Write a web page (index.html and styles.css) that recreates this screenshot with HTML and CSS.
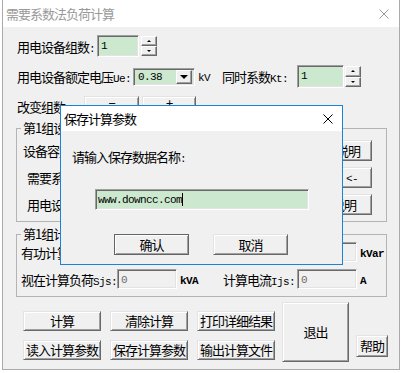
FILE: index.html
```html
<!DOCTYPE html>
<html lang="zh-CN">

<head>
    <meta charset="UTF-8">
    <meta name="viewport" content="width=device-width, initial-scale=1.0">
    <title>需要系数法负荷计算</title>
    <link rel="stylesheet" href="styles.css">
</head>

<body>

    <div class="win">
        <div class="title-bar">
            <span class="title inactive">需要系数法负荷计算</span>
            <svg class="close" width="10" height="10" viewBox="0 0 10 10">
                <path d="M0.5 0.5L9.5 9.5M9.5 0.5L0.5 9.5" stroke="#999" stroke-width="1" />
            </svg>
        </div>

        <div class="client">
            <div class="row row1">
                <label class="lbl w-count">用电设备组数<span class="m">:</span></label>
                <div class="edit count"><span class="m">1</span></div>
                <div class="spin">
                    <button class="spin-up"></button>
                    <button class="spin-down"></button>
                </div>
            </div>

            <div class="row row2">
                <label class="lbl w-ue">用电设备额定电压<span class="m">Ue:</span></label>
                <div class="combo">
                    <span class="m">0.38</span>
                    <span class="drop"></span>
                </div>
                <span class="unit-kv m">kV</span>
                <label class="lbl w-kt">同时系数<span class="m">Kt:</span></label>
                <div class="edit kt"><span class="m">1</span></div>
                <div class="spin tall">
                    <button class="spin-up"></button>
                    <button class="spin-down"></button>
                </div>
            </div>

            <div class="row row3">
                <label class="lbl w-change">改变组数<span class="m">:</span></label>
                <button class="btn minus">−</button>
                <button class="btn plus">+</button>
            </div>

            <fieldset class="group g1">
                <legend>第1组设备</legend>
                <div class="grow first">
                    <label>设备容量</label>
                    <button class="btn side w48">说明</button>
                </div>
                <div class="grow inset">
                    <label>需要系数</label>
                    <button class="btn side w40"><span class="m">&lt;-</span></button>
                </div>
                <div class="grow inset">
                    <label>用电设备</label>
                    <button class="btn side w56">说明</button>
                </div>
            </fieldset>

            <fieldset class="group g2">
                <legend>第1组计算</legend>
                <div class="res-row">
                    <label class="res-lbl">有功计算负荷<span class="m">Pjs:</span></label>
                    <div class="edit out"></div>
                    <span class="res-unit m"></span>
                    <span class="res-lbl2"></span>
                    <div class="edit out"></div>
                    <span class="res-unit m">kVar</span>
                </div>
                <div class="res-row">
                    <label class="res-lbl">视在计算负荷<span class="m">Sjs:</span></label>
                    <div class="edit out"><span class="m">0</span></div>
                    <span class="res-unit m">kVA</span>
                    <label class="res-lbl2">计算电流<span class="m">Ijs:</span></label>
                    <div class="edit out"><span class="m">0</span></div>
                    <span class="res-unit m">A</span>
                </div>
            </fieldset>

            <div class="actions">
                <div class="btn-grid">
                    <button class="btn">计算</button>
                    <button class="btn">清除计算</button>
                    <button class="btn">打印详细结果</button>
                    <button class="btn">读入计算参数</button>
                    <button class="btn">保存计算参数</button>
                    <button class="btn">输出计算文件</button>
                </div>
                <button class="btn exit">退出</button>
                <button class="btn help">帮助</button>
            </div>
        </div>
    </div>

    <div class="dialog">
        <div class="dlg-title">
            <span class="title">保存计算参数</span>
            <svg class="close" width="10" height="10" viewBox="0 0 10 10">
                <path d="M0.5 0.5L9.5 9.5M9.5 0.5L0.5 9.5" stroke="#000" stroke-width="1" />
            </svg>
        </div>
        <div class="dlg-body">
            <p class="prompt">请输入保存数据名称<span class="m">:</span></p>
            <div class="edit name"><span class="m">www.downcc.com</span><span class="caret"></span></div>
            <div class="dlg-buttons">
                <button class="btn default">确认</button>
                <button class="btn">取消</button>
            </div>
        </div>
    </div>

</body>

</html>
```

FILE: styles.css
```css
* {
    box-sizing: border-box;
}

body {
    margin: 0;
    background-color: #fff;
    font-family: "Noto Sans CJK SC", sans-serif;
    font-size: 13px;
    letter-spacing: -1px;
    color: #000;
    overflow: hidden;
}

.m {
    font-family: "Liberation Mono", monospace;
    font-size: 11px;
    letter-spacing: -0.6px;
}

label {
    white-space: nowrap;
}

/* main window */

.win {
    margin-left: 2px;
    width: 398px;
    border: 1px solid #aaa;
    border-top: none;
}

.title-bar {
    height: 27px;
    background-color: #fff;
    display: flex;
    align-items: center;
    justify-content: space-between;
    padding: 0 10px 0 3px;
}

.title {
    line-height: 16px;
}

.title.inactive {
    color: #999;
}

.close {
    display: block;
}

.client {
    height: 342px;
    background-color: #f0f0f0;
    padding-top: 1px;
}

.row {
    display: flex;
    align-items: center;
    margin-left: 14px;
}

.row > * {
    flex: none;
}

.row1 {
    margin-top: 7px;
    height: 22px;
}

.row2 {
    margin-top: 8px;
    height: 23px;
}

.row3 {
    margin-top: 8px;
    height: 20px;
    align-items: flex-start;
}

.w-count {
    width: 80px;
}

.w-ue {
    width: 116px;
}

.w-kt {
    width: 75px;
}

.w-change {
    width: 67px;
    padding-top: 1px;
}

/* sunken edit box */

.edit {
    background-color: #cce8cf;
    border: 1px solid;
    border-color: #a0a0a0 #fff #fff #a0a0a0;
    box-shadow: inset 1px 1px #696969, inset -1px -1px #e3e3e3;
    padding: 1px 3px;
    line-height: 14px;
}

.edit.count {
    width: 42px;
    height: 22px;
}

.edit.kt {
    width: 47px;
    height: 23px;
}

.spin {
    display: flex;
    flex-direction: column;
    margin-left: 2px;
    height: 20px;
    width: 16px;
}

.spin.tall {
    margin-left: 1px;
    height: 21px;
}

.spin button {
    flex: 1;
    padding: 0;
    position: relative;
    background-color: #f0f0f0;
    border: 1px solid;
    border-color: #fff #696969 #696969 #fff;
    box-shadow: inset -1px -1px #a0a0a0;
}

.spin-up::after,
.spin-down::after {
    content: "";
    position: absolute;
    left: 5px;
    top: 3px;
    border-left: 2px solid transparent;
    border-right: 2px solid transparent;
}

.spin-up::after {
    border-bottom: 2px solid #000;
}

.spin-down::after {
    border-top: 2px solid #000;
}

.combo {
    width: 62px;
    height: 18px;
    display: flex;
    align-items: center;
    justify-content: space-between;
    background-color: #cce8cf;
    border: 1px solid;
    border-color: #a0a0a0 #fff #fff #a0a0a0;
    box-shadow: inset 1px 1px #696969, inset -1px -1px #e3e3e3;
    padding: 2px 2px 2px 4px;
}

.drop {
    width: 16px;
    height: 14px;
    background-color: #f0f0f0;
    border: 1px solid;
    border-color: #fff #696969 #696969 #fff;
    box-shadow: inset -1px -1px #a0a0a0;
    display: flex;
    align-items: center;
    justify-content: center;
}

.drop::after {
    content: "";
    border-left: 4px solid transparent;
    border-right: 4px solid transparent;
    border-top: 4px solid #000;
}

.unit-kv {
    width: 27px;
    padding-left: 3px;
    padding-top: 3px;
}

/* raised button */

.btn {
    font-family: "Noto Sans CJK SC", sans-serif;
    font-size: 13px;
    letter-spacing: -1px;
    color: #000;
    background-color: #f0f0f0;
    border: 1px solid;
    border-color: #e3e3e3 #696969 #696969 #e3e3e3;
    box-shadow: inset 1px 1px #fff, inset -1px -1px #a0a0a0;
    padding: 0;
    line-height: 16px;
}

.minus {
    width: 55px;
    height: 13px;
    line-height: 10px;
}

.plus {
    width: 54px;
    height: 13px;
    line-height: 10px;
    margin-left: 3px;
}

/* group boxes */

.group {
    margin: 4px 0 0 13px;
    width: 371px;
    border: 1px solid #b4b4b4;
    padding: 0 14px 0 4px;
    min-width: 0;
}

.group legend {
    padding: 0 2px;
    line-height: 16px;
}

.g1 {
    padding-bottom: 6px;
}

.grow {
    display: flex;
    align-items: center;
    height: 21px;
    margin-top: 6px;
}

.grow.first {
    margin-top: 4px;
    padding-left: 2px;
}

.grow.inset {
    padding-left: 6px;
}

.side {
    margin-left: auto;
    height: 21px;
}

.w48 {
    width: 48px;
}

.w40 {
    width: 40px;
}

.w56 {
    width: 56px;
}

.g2 {
    padding-bottom: 7px;
}

.res-row {
    display: flex;
    align-items: center;
    height: 20px;
    margin-top: 7px;
}

.res-row > * {
    flex: none;
}

.res-row:first-of-type {
    margin-top: 0;
}

.res-lbl {
    width: 96px;
}

.res-lbl2 {
    width: 76px;
    text-align: right;
    padding-right: 2px;
}

.edit.out {
    width: 60px;
    height: 20px;
    background-color: #f0f0f0;
    color: #6d6d6d;
}

.res-unit {
    width: 44px;
    padding-left: 3px;
    padding-top: 4px;
    font-weight: bold;
}

.res-unit:last-child {
    width: auto;
}

/* bottom buttons */

.actions {
    display: flex;
    align-items: flex-start;
    margin: 5px 0 0 20px;
}

.btn-grid {
    display: grid;
    grid-template-columns: repeat(3, 78px);
    grid-auto-rows: 20px;
    column-gap: 9px;
    row-gap: 9px;
    margin-top: 9px;
}

.exit {
    width: 67px;
    height: 60px;
    margin-left: 7px;
}

.help {
    width: 32px;
    height: 22px;
    margin: 33px 0 0 7px;
}

/* save dialog */

.dialog {
    position: absolute;
    left: 60px;
    top: 105px;
    width: 283px;
    height: 160px;
    border: 1px solid #1883d7;
    background-color: #f0f0f0;
}

.dlg-title {
    height: 25px;
    background-color: #fff;
    display: flex;
    align-items: center;
    justify-content: space-between;
    padding: 0 9px 0 3px;
}

.dlg-body {
    padding: 18px 0 0 11px;
}

.prompt {
    margin: 0;
    line-height: 16px;
}

.edit.name {
    display: flex;
    align-items: center;
    margin: 22px 0 0 23px;
    width: 214px;
    height: 21px;
    padding: 1px 2px;
}

.caret {
    width: 1px;
    height: 13px;
    background-color: #000;
}

.dlg-buttons {
    display: flex;
    gap: 24px;
    margin: 24px 0 0 42px;
}

.dlg-buttons .btn {
    width: 75px;
    height: 21px;
}

.btn.default {
    border-color: #646464;
}
```
